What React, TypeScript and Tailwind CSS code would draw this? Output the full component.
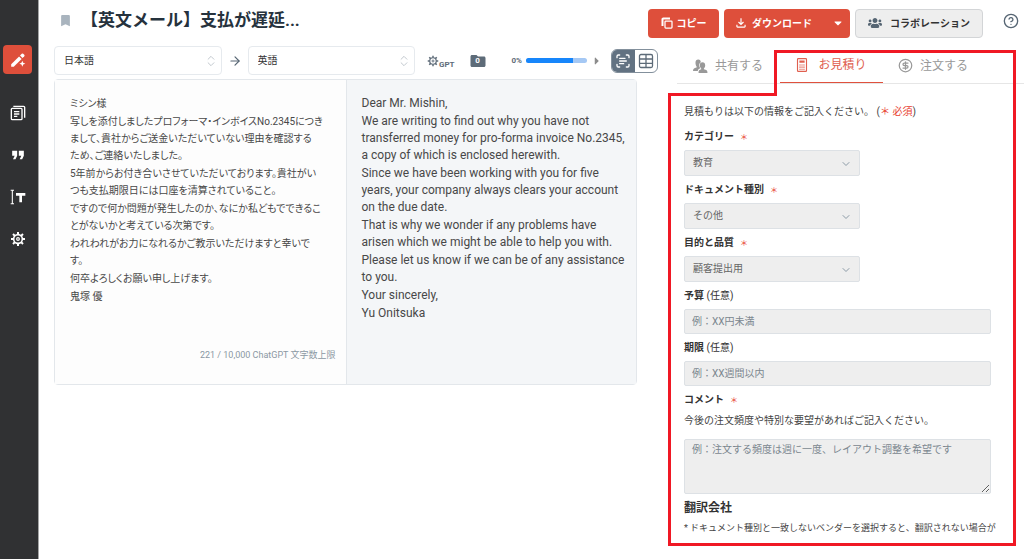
import { useState, type ReactNode } from "react";
import {
  ArrowRight,
  ChevronDown,
  ChevronsUpDown,
  CircleDollarSign,
  CircleHelp,
  ScanText,
} from "lucide-react";
import { FaCaretDown, FaCaretRight, FaUsers } from "react-icons/fa";
import { MdBookmark, MdFolder, MdFormatQuote, MdOutlineFileDownload } from "react-icons/md";

const sourceText = [
  "ミシン様",
  "写しを添付しましたプロフォーマ・インボイスNo.2345につき\nまして、貴社からご送金いただいていない理由を確認する\nため、ご連絡いたしました。",
  "5年前からお付き合いさせていただいております。貴社がい\nつも支払期限日には口座を清算されていること。",
  "ですので何か問題が発生したのか、なにか私どもでできるこ\nとがないかと考えている次第です。",
  "われわれがお力になれるかご教示いただけますと幸いで\nす。",
  "何卒よろしくお願い申し上げます。",
  "鬼塚 優",
];

const targetText = [
  "Dear Mr. Mishin,",
  "We are writing to find out why you have not\ntransferred money for pro-forma invoice No.2345,\na copy of which is enclosed herewith.",
  "Since we have been working with you for five\nyears, your company always clears your account\non the due date.",
  "That is why we wonder if any problems have\narisen which we might be able to help you with.",
  "Please let us know if we can be of any assistance\nto you.",
  "Your sincerely,",
  "Yu Onitsuka",
];

function PencilIcon() {
  return (
    <svg viewBox="0 0 24 24" className="size-4" fill="currentColor" aria-hidden="true">
      <path d="M1.8 18.4 13.6 6.6l3.8 3.8L5.6 22.2H1.8z" />
      <path d="m15 5.2 2.6-2.6a1.6 1.6 0 0 1 2.2 0l1.6 1.6a1.6 1.6 0 0 1 0 2.2L18.8 9z" />
      <path d="m18.5 13 1.3 3.2 3.2 1.3-3.2 1.3-1.3 3.2-1.3-3.2-3.2-1.3 3.2-1.3z" />
    </svg>
  );
}

function DocumentsIcon() {
  return (
    <svg viewBox="0 0 24 24" className="size-4" fill="none" stroke="currentColor" strokeWidth="2" aria-hidden="true">
      <rect x="2" y="5" width="16" height="17" rx="1.5" />
      <path d="M5 2h15.5A1.5 1.5 0 0 1 22 3.500V19" />
      <path d="M6 10h8M6 13.500h8M6 17h5" />
    </svg>
  );
}

function TextCursorIcon() {
  return (
    <svg viewBox="0 0 24 24" className="size-4" fill="none" stroke="currentColor" aria-hidden="true">
      <path d="M1 2h5M3.500 2v20M1 22h5" strokeWidth="1.600" />
      <path d="M9 8h14M16 8v12" strokeWidth="4" />
    </svg>
  );
}

function GearIcon({ className }: { className: string }) {
  return (
    <svg viewBox="0 0 24 24" className={className} fill="none" stroke="currentColor" strokeWidth="2.400" aria-hidden="true">
      <circle cx="12" cy="12" r="6.500" />
      <circle cx="12" cy="12" r="2" strokeWidth="1.800" />
      <path
        d="M12 1.500v4M12 18.500v4M1.500 12h4M18.500 12h4M4.500 4.500l2.800 2.800M16.700 16.700l2.800 2.800M4.500 19.500l2.800-2.800M16.700 7.300l2.800-2.800"
        strokeWidth="3"
      />
    </svg>
  );
}

function CopyIcon() {
  return (
    <svg viewBox="0 0 24 24" className="size-3" fill="none" stroke="currentColor" aria-hidden="true">
      <path d="M3 18V4.500A1.500 1.500 0 0 1 4.500 3H18" strokeWidth="4" />
      <rect x="8" y="8" width="14" height="14" rx="1.500" strokeWidth="2.500" />
    </svg>
  );
}

function TableIcon() {
  return (
    <svg viewBox="0 0 16 16" className="size-4" fill="none" stroke="currentColor" strokeWidth="1.300" aria-hidden="true">
      <rect x="1.500" y="1.500" width="13" height="13" rx="1.500" />
      <path d="M1.500 6h13M1.500 10.300h13M8 1.500v13" />
    </svg>
  );
}

function ShareIcon() {
  return (
    <svg viewBox="0 0 16 16" className="size-4" fill="currentColor" aria-hidden="true">
      <path d="M6.200 1.500c1.800 0 2.600 1.200 2.600 2.700C7.500 5 7 6.200 7.200 7.800c.1 1 .5 1.800 1.100 2.500-1.500.6-2.300 1.300-2.500 2.700H1c0-2.200.8-2.800 3.600-3.600v-1C3.800 7.600 3.500 6.300 3.500 4.500c0-1.800 1-3 2.700-3z" />
      <path d="M10.500 4.300c1.700 0 2.700 1.100 2.700 2.900 0 1.300-.4 2.500-1.300 3.200v.9c2.500.6 3.600 1.100 3.600 3.700h-9c0-2.600.8-3.100 2.700-3.700v-.9C8.300 9.700 7.800 8.500 7.800 7.200c0-1.800 1-2.900 2.700-2.900z" />
    </svg>
  );
}

function CalculatorIcon() {
  return (
    <svg viewBox="0 0 16 20" className="h-4 w-3" fill="none" stroke="currentColor" strokeWidth="1.500" aria-hidden="true">
      <rect x="2" y="1.500" width="12" height="17" rx="1" />
      <path d="M4.500 5.500h7" strokeWidth="3" />
      <path d="M4.500 10h7M4.500 12.800h7M4.500 15.600h7" strokeDasharray="1.800 0.800" />
    </svg>
  );
}

function Required() {
  return <span className="ml-1.5 text-[8px] leading-none font-normal text-[#e8402f]">＊</span>;
}

function LanguageSelect({ label, value }: { label: string; value: string }) {
  return (
    <div className="relative min-w-0 flex-1">
      <select
        aria-label={label}
        className="block h-[29px] w-full appearance-none rounded border border-[#e6eaee] bg-white px-[9px] text-[10px] text-[#333]"
      >
        <option>{value}</option>
      </select>
      <ChevronsUpDown className="pointer-events-none absolute top-2 right-1 size-3.5 text-[#b9c0c7]" strokeWidth={1.5} />
    </div>
  );
}

function Field({
  id,
  label,
  required,
  children,
}: {
  id: string;
  label: string;
  required?: boolean;
  children: ReactNode;
}) {
  return (
    <div className="flex flex-col gap-[5px]">
      <label htmlFor={id} className="text-[10px] leading-4 font-bold text-[#333]">
        {label}
        {required ? <Required /> : <span className="font-normal"> (任意)</span>}
      </label>
      {children}
    </div>
  );
}

function FormSelect({ id, value }: { id: string; value: string }) {
  return (
    <div className="relative w-[176px]">
      <select
        id={id}
        className="block h-[26px] w-full appearance-none rounded-xs border border-[#dde1e5] bg-[#eee] px-2 text-[10px] text-[#666]"
      >
        <option>{value}</option>
      </select>
      <ChevronDown className="pointer-events-none absolute top-2 right-2 size-3 text-[#8b9aa6]" />
    </div>
  );
}

const inputClass =
  "block w-full rounded-xs border border-[#dde1e5] bg-[#eee] px-[7px] text-[10px] placeholder:text-[#7b868e]";

function Sidebar() {
  const items = [
    { label: "履歴", icon: <DocumentsIcon /> },
    { label: "用語", icon: <MdFormatQuote className="size-5" /> },
    { label: "テキスト", icon: <TextCursorIcon /> },
    { label: "設定", icon: <GearIcon className="size-4" /> },
  ];

  return (
    <nav className="flex w-[39px] shrink-0 flex-col items-center border-r border-[#a4a5a6] bg-[#303133] pt-[45px] pr-[3px] text-white">
      <button aria-label="翻訳" className="mb-6 flex size-[29px] items-center justify-center rounded bg-[#de4f3b]">
        <PencilIcon />
      </button>
      <div className="flex flex-col gap-3">
        {items.map((item) => (
          <button key={item.label} aria-label={item.label} className="flex h-[30px] w-8 items-center justify-center">
            {item.icon}
          </button>
        ))}
      </div>
    </nav>
  );
}

function Header() {
  return (
    <header className="flex h-[46px] items-center pr-[5px]">
      <div className="flex min-w-0 flex-1 items-center gap-2 pb-1.5 pl-[19px]">
        <MdBookmark className="size-[15px] shrink-0 text-[#a9b4be]" />
        <h1 className="truncate text-[17px] leading-6 font-bold text-[#26323d]">【英文メール】支払が遅延...</h1>
      </div>
      <div className="flex shrink-0 items-center gap-[5px] text-[10px] font-bold">
        <button className="flex h-[29px] w-[71px] items-center justify-center gap-1 rounded bg-[#de4f3b] text-white">
          <CopyIcon />
          コピー
        </button>
        <div className="flex h-[29px] w-[126px] rounded bg-[#de4f3b] text-white">
          <button className="flex flex-1 items-center gap-1 pl-2.5">
            <MdOutlineFileDownload className="size-3.5" />
            ダウンロード
          </button>
          <button aria-label="ダウンロード形式" className="flex w-[25px] items-center justify-center">
            <FaCaretDown className="size-3" />
          </button>
        </div>
        <button className="flex h-[29px] w-32 items-center justify-center gap-2 rounded border border-[#d3d5d7] bg-[#eee] text-[#333]">
          <FaUsers className="size-3.5 text-[#566573]" />
          コラボレーション
        </button>
      </div>
      <button aria-label="ヘルプ" className="ml-5 pb-1 text-[#566573]">
        <CircleHelp className="size-4" />
      </button>
    </header>
  );
}

function Editor() {
  const [view, setView] = useState<"text" | "table">("text");

  return (
    <main className="min-w-0 flex-1 pr-[19px] pl-[15px]">
      <div className="flex h-[29px] items-center">
        <div className="flex w-[361px] shrink-0 items-center">
          <LanguageSelect label="翻訳元の言語" value="日本語" />
          <ArrowRight className="mx-1.5 size-3.5 shrink-0 text-[#566573]" />
          <LanguageSelect label="翻訳先の言語" value="英語" />
        </div>
        <div className="flex flex-1 items-center pl-3 text-[#5d6b78]">
          <button className="flex items-center text-[8px] font-bold" aria-label="GPT設定">
            <GearIcon className="size-3" />
            <span className="pt-2">GPT</span>
          </button>
          <button className="relative ml-3.5" aria-label="フォルダー">
            <MdFolder className="size-[18px]" />
            <span className="absolute inset-x-0 top-[3px] text-center text-[8px] leading-3 font-bold text-white">0</span>
          </button>
          <div className="mr-2 ml-auto flex items-center gap-1 text-[8px] font-bold">
            0%
            <div className="h-[5px] w-[61px] overflow-hidden rounded-full bg-[#a5c8f4]">
              <div className="h-full w-[47px] bg-[#1786fb]" />
            </div>
            <FaCaretRight className="size-3 text-[#8c8c8c]" />
          </div>
          <div className="flex h-6 w-[47px] overflow-hidden rounded-md border border-[#83909c]">
            <button
              aria-label="テキスト表示"
              aria-pressed={view === "text"}
              onClick={() => setView("text")}
              className="flex flex-1 items-center justify-center bg-[#627282] text-white"
            >
              <ScanText className="size-4" />
            </button>
            <button
              aria-label="表形式"
              aria-pressed={view === "table"}
              onClick={() => setView("table")}
              className="flex flex-1 items-center justify-center"
            >
              <TableIcon />
            </button>
          </div>
        </div>
      </div>

      <div className="mt-1 mr-[21px] grid min-h-[306px] grid-cols-2 rounded border border-[#e3e7eb] leading-[17px] text-[#484848]">
        <section className="flex flex-col bg-[#fdfdfd] pt-[15px] pr-2.5 pl-[15px] text-[10px]">
          <div className="flex flex-col gap-px [font-feature-settings:'palt']">
            {sourceText.map((paragraph) => (
              <p key={paragraph} className="whitespace-pre">
                {paragraph}
              </p>
            ))}
          </div>
          <p className="mt-auto pb-5 text-right text-[9px] text-[#8b98a3]">221 / 10,000 ChatGPT 文字数上限</p>
        </section>
        <section className="flex flex-col gap-px border-l border-[#e3e7eb] bg-[#f4f6f8] pt-[15px] pl-[15px] text-xs leading-[17px]">
          {targetText.map((paragraph) => (
            <p key={paragraph} className="whitespace-pre">
              {paragraph}
            </p>
          ))}
        </section>
      </div>
    </main>
  );
}

function RequestPanel() {
  return (
    <aside className="relative w-[347px] shrink-0">
      <div className="flex h-[38px] border-b border-[#e6e6e6] text-xs text-[#999]">
        <button className="flex w-[103px] items-center gap-[7px] pt-0.5 pl-[15px]">
          <ShareIcon />
          共有する
        </button>
        <button className="flex w-[103px] items-center justify-center gap-2.5 border-b border-b-[#e0513d] pt-0.5 text-[#e0604f]">
          <CalculatorIcon />
          お見積り
        </button>
        <button className="flex items-center gap-[7px] pt-0.5 pl-[15px]">
          <CircleDollarSign className="size-[15px]" />
          注文する
        </button>
      </div>

      <form className="flex flex-col gap-1.5 pt-5 pr-[33px] pl-[7px] text-[10px] leading-4 text-[#444]">
        <p className="mb-[3px]">
          見積もりは以下の情報をご記入ください。 (<span className="text-[#e8402f]">＊ 必須</span>)
        </p>
        <Field id="category" label="カテゴリー" required>
          <FormSelect id="category" value="教育" />
        </Field>
        <Field id="document-type" label="ドキュメント種別" required>
          <FormSelect id="document-type" value="その他" />
        </Field>
        <Field id="purpose" label="目的と品質" required>
          <FormSelect id="purpose" value="顧客提出用" />
        </Field>
        <Field id="budget" label="予算">
          <input id="budget" type="text" placeholder="例：XX円未満" className={`${inputClass} h-[25px]`} />
        </Field>
        <Field id="deadline" label="期限">
          <input id="deadline" type="text" placeholder="例：XX週間以内" className={`${inputClass} h-[25px]`} />
        </Field>
        <div>
          <label htmlFor="comment" className="block font-bold text-[#333]">
            コメント
            <Required />
          </label>
          <p className="mt-[5px] mb-2.5">今後の注文頻度や特別な要望があればご記入ください。</p>
          <textarea
            id="comment"
            placeholder="例：注文する頻度は週に一度、レイアウト調整を希望です"
            className={`${inputClass} h-[55px] pt-0.5`}
          />
        </div>
        <h2 className="text-xs leading-4 font-bold text-[#333]">翻訳会社</h2>
        <p className="-mt-0.5 text-[9px] whitespace-nowrap">
          * ドキュメント種別と一致しないベンダーを選択すると、翻訳されない場合が
        </p>
      </form>

      {/* Highlight around the estimate tab and its form */}
      <svg
        className="pointer-events-none absolute -top-1 -left-3 h-[506px] w-[359px]"
        viewBox="0 0 359 506"
        fill="none"
        stroke="#f01824"
        strokeWidth="3"
        aria-hidden="true"
      >
        <path d="M4.500 52.500H110.500V9.500H349.500V502.500H4.500Z" />
      </svg>
    </aside>
  );
}

export default function App() {
  return (
    <div className="flex min-h-screen overflow-hidden bg-white font-['Roboto','Noto_Sans_CJK_JP',sans-serif]">
      <Sidebar />
      <div className="min-w-0 flex-1">
        <Header />
        <div className="flex">
          <Editor />
          <RequestPanel />
        </div>
      </div>
    </div>
  );
}
